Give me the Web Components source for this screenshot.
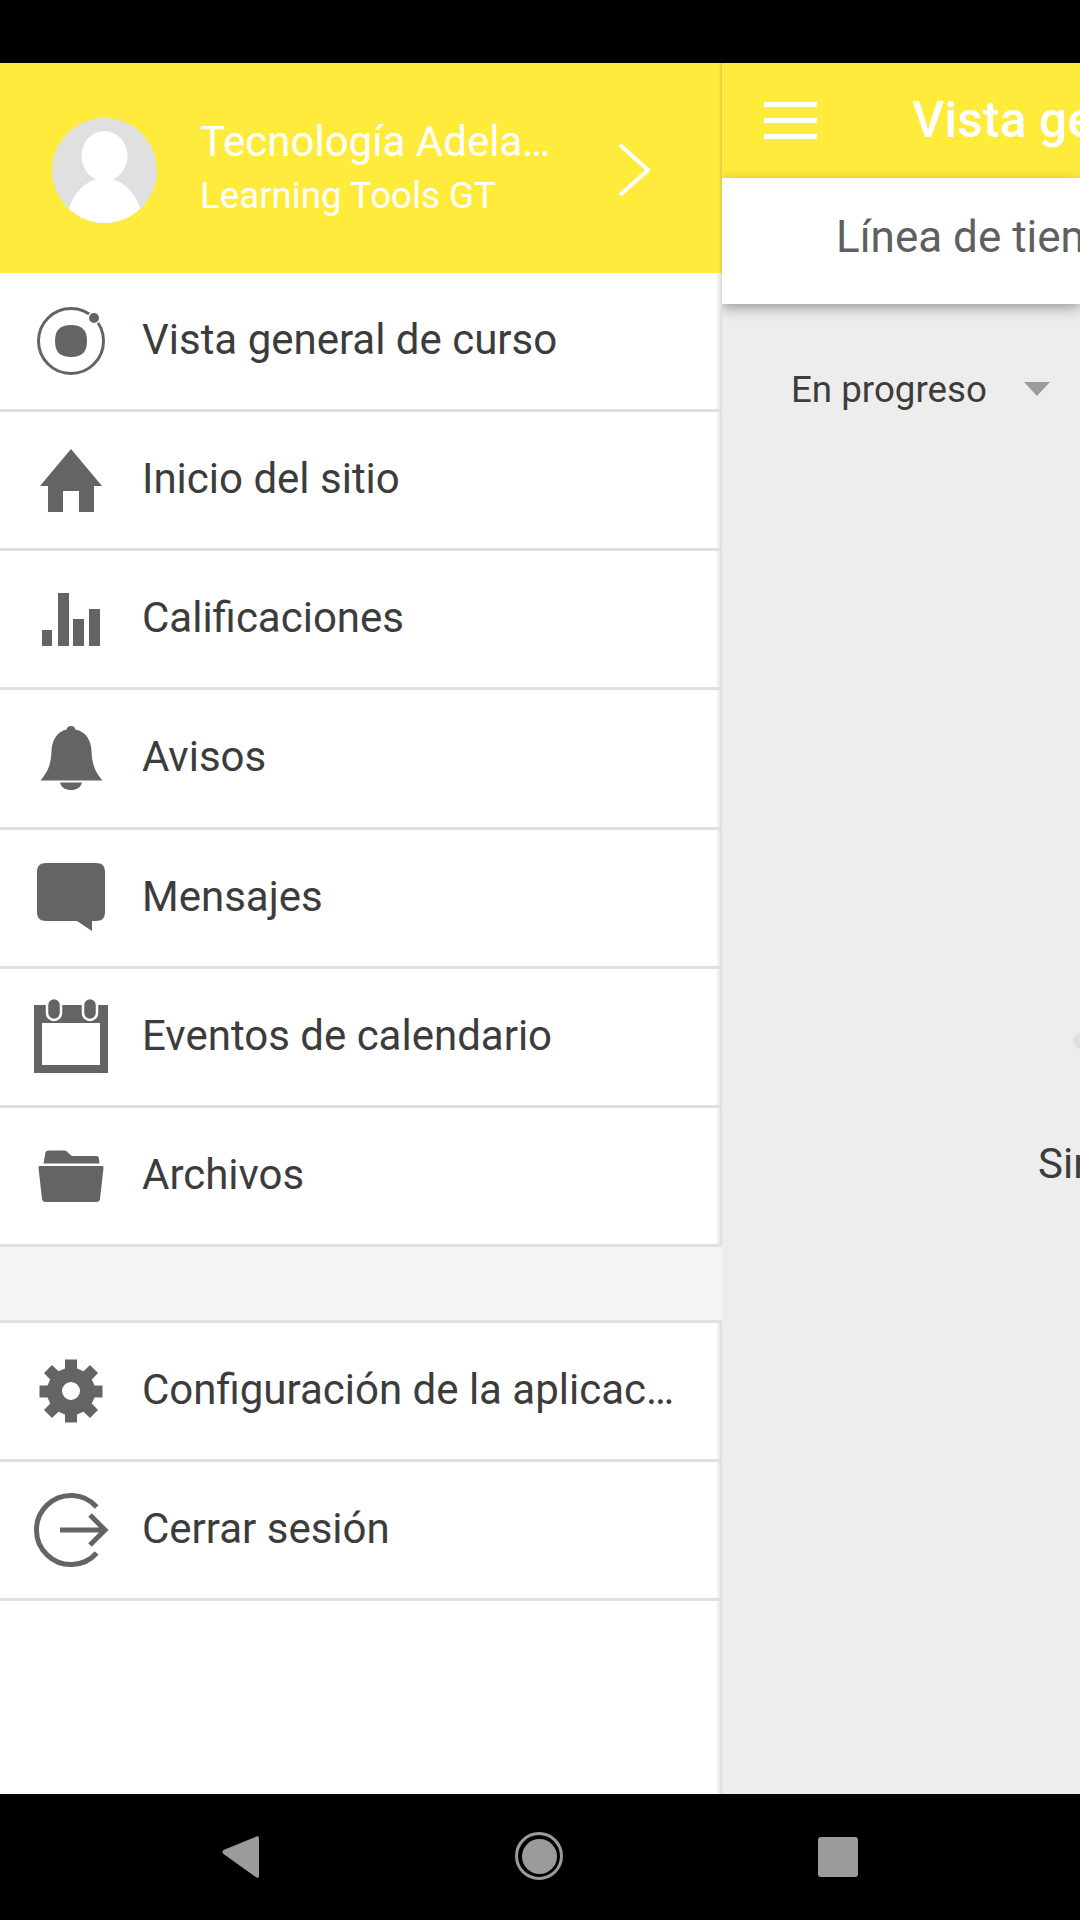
<!DOCTYPE html>
<html lang="es">
<head>
<meta charset="utf-8">
<title>Menu</title>
<style>
  html, body { margin: 0; padding: 0; background: #000; }
  body { width: 1080px; height: 1920px; overflow: hidden; font-family: Roboto, "Liberation Sans", sans-serif; }
</style>
</head>
<body>
<app-shell>
  <side-drawer slot="drawer">
    <drawer-header slot="header" name="Tecnología Adela…" site="Learning Tools GT"></drawer-header>
    <drawer-item icon="ionic">Vista general de curso</drawer-item>
    <drawer-item icon="home">Inicio del sitio</drawer-item>
    <drawer-item icon="grades">Calificaciones</drawer-item>
    <drawer-item icon="bell">Avisos</drawer-item>
    <drawer-item icon="message">Mensajes</drawer-item>
    <drawer-item icon="calendar">Eventos de calendario</drawer-item>
    <drawer-item icon="folder">Archivos</drawer-item>
    <drawer-spacer></drawer-spacer>
    <drawer-item icon="gear">Configuración de la aplicac…</drawer-item>
    <drawer-item icon="logout">Cerrar sesión</drawer-item>
  </side-drawer>
  <main-pane slot="main"></main-pane>
</app-shell>

<script>
// every icon is drawn on an 80x80 box centred on the row
const ICONS = {
  ionic: `<circle cx="40" cy="40" r="32.5" fill="none" stroke="#646464" stroke-width="3"/>
    <circle cx="63" cy="17" r="6.5" fill="#fff"/><circle cx="63" cy="17" r="5" fill="#646464"/>
    <path d="M40 24c11 0 16 5 16 16s-5 16-16 16-16-5-16-16 5-16 16-16z" fill="#646464"/>`,
  home: `<path d="M40 9 71 46H63V72H48V51H32V72H17V46H9z" fill="#646464"/>`,
  grades: `<path d="M11 51H21V67H11zM27 14H38V67H27zM42 40H53V67H42zM58 30H69V67H58z" fill="#646464"/>`,
  bell: `<g transform="translate(0 1)"><path d="M40 7c2.800 0 4 1.500 4.300 3.500C55 12.500 60 21 60.500 32c.6 13 3 20 11 29.500H9.500c8-9.500 10.400-16.500 11-29.500C21 21 26 12.500 35.700 10.500 36 8.500 37.200 7 40 7z" fill="#646464"/>
    <path d="M29 63.500H51C49.500 69 45.500 71 40 71s-9.500-2-11-7.500z" fill="#646464"/></g>`,
  message: `<path d="M15 5H65C71 5 74 8 74 14V54C74 60 71 63 65 63H61V73L46 63H15C9 63 6 60 6 54V14C6 8 9 5 15 5z" fill="#646464"/>`,
  calendar: `<path d="M3 8H77V76H3zM11 26V68H69V26z" fill="#646464" fill-rule="evenodd"/>
    <rect x="16" y="1" width="14" height="22" rx="7" fill="#646464" stroke="#fff" stroke-width="2.500"/>
    <rect x="52" y="1" width="14" height="22" rx="7" fill="#646464" stroke="#fff" stroke-width="2.500"/>`,
  folder: `<g transform="translate(0 3)"><path d="M14 16C14 13 15 11.500 18 11.500H33C35 11.500 36 12.500 38 14.500L41 17H65C67 17 68 18 68 20L68.500 24.500H12.500z" fill="#646464"/>
    <path d="M9 27H71C72 27 72.500 27.500 72.500 29L69 60C68.800 62 67.500 63 65.500 63H14.500C12.500 63 11.200 62 11 60L7.500 29C7.500 27.500 8 27 9 27z" fill="#646464"/></g>`,
  gear: `<path fill="#646464" fill-rule="evenodd" d="M34 8.500H46V17.500L52.500 20.200 59 14 67 22 60.800 28.500 63.500 34.500H71.500V46.500H63.500L60.800 52.500 67 59 59 67 52.500 60.800 46 63.500V71.500H34V63.500L27.500 60.800 21 67 13 59 19.200 52.500 16.500 46.500H8.500V34.500H16.500L19.200 28.500 13 22 21 14 27.500 20.200 34 17.500zM40 31A9 9 0 1 0 40 49 9 9 0 1 0 40 31z"/>`,
  logout: `<path d="M65.700 17A34.500 34.500 0 1 0 65.700 63" fill="none" stroke="#646464" stroke-width="5"/>
    <path d="M29 40H73M59 25 74 40 59 55" fill="none" stroke="#646464" stroke-width="5"/>`
};

class AppShell extends HTMLElement {
  constructor() {
    super();
    this.attachShadow({ mode: "open" });
    this.shadowRoot.innerHTML = `
    <style>
      :host { display: flex; flex-direction: column; width: 1080px; height: 1920px; }
      .status { height: 63px; background: #000; flex: none; }
      .split { display: flex; height: 1731px; flex: none; }
      ::slotted([slot="drawer"]) { flex: none; }
      ::slotted([slot="main"]) { flex: 1; min-width: 0; }
    </style>
    <div class="status"></div>
    <div class="split">
      <slot name="drawer"></slot>
      <slot name="main"></slot>
    </div>
    <nav-bar></nav-bar>`;
  }
}

class SideDrawer extends HTMLElement {
  constructor() {
    super();
    this.attachShadow({ mode: "open" });
    this.shadowRoot.innerHTML = `
    <style>
      :host { display: flex; flex-direction: column; width: 722px; box-sizing: border-box;
        background: linear-gradient(to right, #fff 716px, #d9d9d9 722px); }
    </style>
    <slot name="header"></slot>
    <slot></slot>`;
  }
}

class DrawerHeader extends HTMLElement {
  constructor() {
    super();
    this.attachShadow({ mode: "open" });
    this.shadowRoot.innerHTML = `
    <style>
      :host { display: flex; align-items: center; height: 210px; color: #fff;
        background: linear-gradient(to right, #ffeb3b 719px, #d8c84c 722px);
        padding: 4px 0 0 52px; box-sizing: border-box; }
      svg { flex: none; display: block; }
      .who { flex: 1; min-width: 0; margin-left: 43px; display: flex; flex-direction: column; }
      .name { font-size: 42px; line-height: 52px; white-space: nowrap; }
      .site { font-size: 36.700px; line-height: 56px; white-space: nowrap; }
      .go { margin-right: 72px; }
    </style>
    <svg width="105" height="105" viewBox="0 0 105 105">
      <defs><clipPath id="c"><circle cx="52.500" cy="52.500" r="52.500"/></clipPath></defs>
      <circle cx="52.500" cy="52.500" r="52.500" fill="#e0e0e0"/>
      <g clip-path="url(#c)" fill="#fff">
        <ellipse cx="52.500" cy="38" rx="23" ry="25"/>
        <path d="M14 105C16 80 32 60 52.500 60S89 80 91 105z"/>
      </g>
    </svg>
    <div class="who">
      <span class="name"></span>
      <span class="site"></span>
    </div>
    <svg class="go" width="32" height="52" viewBox="0 0 32 52">
      <path d="M2 1 30 26 2 51" fill="none" stroke="#fff" stroke-width="4"/>
    </svg>`;
  }

  connectedCallback() {
    this.shadowRoot.querySelector(".name").textContent = this.getAttribute("name");
    this.shadowRoot.querySelector(".site").textContent = this.getAttribute("site");
  }
}

class DrawerItem extends HTMLElement {
  constructor() {
    super();
    this.attachShadow({ mode: "open" });
    this.shadowRoot.innerHTML = `
    <style>
      :host { display: flex; align-items: center; height: 139.140px; box-sizing: border-box;
        border-bottom: 3px solid #e0e0e0; padding-left: 31px; color: #3c3c3c; font-size: 42px; }
      svg { flex: none; display: block; margin-right: 31px; }
      .label { white-space: nowrap; margin-bottom: 3px; }
    </style>
    <svg width="80" height="80" viewBox="0 0 80 80"></svg>
    <span class="label"><slot></slot></span>`;
  }

  connectedCallback() {
    this.shadowRoot.querySelector("svg").innerHTML = ICONS[this.getAttribute("icon")] || "";
  }
}

class DrawerSpacer extends HTMLElement {
  constructor() {
    super();
    this.attachShadow({ mode: "open" });
    this.shadowRoot.innerHTML = `
    <style>
      :host { display: block; height: 76px; box-sizing: border-box; background: #f4f4f4;
        border-bottom: 3px solid #e0e0e0; }
    </style>`;
  }
}

class MainPane extends HTMLElement {
  constructor() {
    super();
    this.attachShadow({ mode: "open" });
    this.shadowRoot.innerHTML = `
    <style>
      :host { display: flex; flex-direction: column; background: #ededed; overflow: hidden; white-space: nowrap; }
      .toolbar { flex: none; display: flex; align-items: center; height: 115px; background: #ffeb3b;
        color: #fff; padding-left: 42px; }
      .burger { flex: none; display: block; margin-right: 95px; }
      .title { font-size: 50px; font-weight: 500; margin-bottom: 2px; }
      .tabs { flex: none; height: 126px; box-sizing: border-box; padding: 0 0 8px 114px; display: flex; align-items: center;
        background: #fff; color: #5f5f5f; font-size: 44px; box-shadow: 0 4px 12px rgba(0,0,0,.35); position: relative; }
      .filter { flex: none; display: flex; align-items: center; height: 170px; padding-left: 69px;
        color: #3c3c3c; font-size: 36.700px; }
      .caret { flex: none; display: block; margin-left: 37px; }
      .empty { display: flex; flex-direction: column; padding-top: 556px; }
      .blob { width: 40px; height: 22px; margin-left: 351px; border-radius: 50%; background: #e0e0e0; }
      .none { font-size: 42px; color: #3c3c3c; margin: 87px 0 0 316px; }
    </style>
    <div class="toolbar">
      <svg class="burger" width="53" height="38" viewBox="0 0 53 38">
        <path d="M0 0H53V5H0zM0 16H53V21H0zM0 32H53V37H0z" fill="#fff"/>
      </svg>
      <span class="title">Vista general de curso</span>
    </div>
    <div class="tabs">Línea de tiempo</div>
    <div class="filter">En progreso
      <svg class="caret" width="26" height="14" viewBox="0 0 26 14"><path d="M0 0H26L13 14z" fill="#9b9b9b"/></svg>
    </div>
    <div class="empty">
      <div class="blob"></div>
      <div class="none">Sin cursos en progreso</div>
    </div>`;
  }
}

class NavBar extends HTMLElement {
  constructor() {
    super();
    this.attachShadow({ mode: "open" });
    this.shadowRoot.innerHTML = `
    <style>
      :host { display: block; height: 126px; background: #000; flex: none; }
      svg { display: block; }
    </style>
    <svg width="1080" height="126" viewBox="0 0 1080 126">
      <path d="M256.500 42.500C258 41.700 259 42.500 259 44V82C259 83.500 258 84.300 256.500 83.500L223.500 60C222 59 222 57 223.500 56z" fill="#9b9b9b"/>
      <ellipse cx="539" cy="62" rx="22.500" ry="22.500" fill="none" stroke="#9b9b9b" stroke-width="3"/>
      <ellipse cx="539.500" cy="62.500" rx="17.500" ry="17.500" fill="#9b9b9b"/>
      <rect x="818" y="43" width="40" height="40" rx="3" fill="#9b9b9b"/>
    </svg>`;
  }
}

customElements.define("app-shell", AppShell);
customElements.define("side-drawer", SideDrawer);
customElements.define("drawer-header", DrawerHeader);
customElements.define("drawer-item", DrawerItem);
customElements.define("drawer-spacer", DrawerSpacer);
customElements.define("main-pane", MainPane);
customElements.define("nav-bar", NavBar);
</script>
</body>
</html>
